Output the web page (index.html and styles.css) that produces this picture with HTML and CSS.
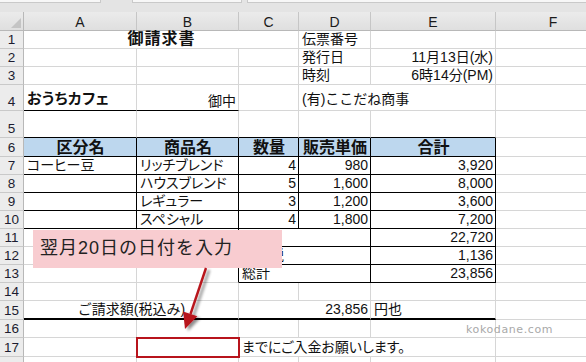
FILE: index.html
```html
<!DOCTYPE html>
<html lang="ja">
<head>
<meta charset="utf-8">
<title>御請求書</title>
<link rel="stylesheet" href="styles.css">
</head>
<body>
<div class="app">
  <div class="topbar">
    <span class="box box-1"></span>
    <span class="box box-2"></span>
    <span class="box box-3"></span>
  </div>
  <table class="sheet">
    <colgroup>
      <col class="c-rh"><col class="c-a"><col class="c-b"><col class="c-c"><col class="c-d"><col class="c-e"><col class="c-f">
    </colgroup>
    <thead>
      <tr class="colhead">
        <th class="corner"><span class="tri"></span></th>
        <th>A</th><th>B</th><th>C</th><th>D</th><th>E</th><th>F</th>
      </tr>
    </thead>
    <tbody>
      <tr class="h18">
        <th class="rn">1</th>
        <td colspan="3" class="title">御請求書</td>
        <td>伝票番号</td><td></td><td></td>
      </tr>
      <tr class="h18">
        <th class="rn">2</th>
        <td></td><td></td><td></td>
        <td>発行日</td><td class="r">11月13日(水)</td><td></td>
      </tr>
      <tr class="h18">
        <th class="rn">3</th>
        <td></td><td></td><td></td>
        <td>時刻</td><td class="r">6時14分(PM)</td><td></td>
      </tr>
      <tr class="h26">
        <th class="rn">4</th>
        <td class="bb shop mid">おうちカフェ</td>
        <td class="bb r">御中</td>
        <td></td>
        <td colspan="2" class="mid">(有)ここだね商事</td>
        <td></td>
      </tr>
      <tr class="h27">
        <th class="rn">5</th>
        <td class="bb"></td><td class="bb"></td><td class="bb"></td><td class="bb"></td><td class="bb"></td><td></td>
      </tr>
      <tr class="h19 head">
        <th class="rn">6</th>
        <td class="hd">区分名</td><td class="hd">商品名</td><td class="hd">数量</td><td class="hd">販売単価</td><td class="hd">合計</td><td></td>
      </tr>
      <tr class="h18">
        <th class="rn">7</th>
        <td class="bx kana">コーヒー豆</td><td class="bx kana">リッチブレンド</td><td class="bx r">4</td><td class="bx r">980</td><td class="bx r">3,920</td><td></td>
      </tr>
      <tr class="h18">
        <th class="rn">8</th>
        <td class="bx"></td><td class="bx kana">ハウスブレンド</td><td class="bx r">5</td><td class="bx r">1,600</td><td class="bx r">8,000</td><td></td>
      </tr>
      <tr class="h18">
        <th class="rn">9</th>
        <td class="bx"></td><td class="bx kana">レギュラー</td><td class="bx r">3</td><td class="bx r">1,200</td><td class="bx r">3,600</td><td></td>
      </tr>
      <tr class="h18">
        <th class="rn">10</th>
        <td class="bx"></td><td class="bx kana">スペシャル</td><td class="bx r">4</td><td class="bx r">1,800</td><td class="bx r">7,200</td><td></td>
      </tr>
      <tr class="h18">
        <th class="rn">11</th>
        <td></td><td class="br"></td>
        <td colspan="2" class="bx">小計</td><td class="bx r">22,720</td><td></td>
      </tr>
      <tr class="h18">
        <th class="rn">12</th>
        <td></td><td class="br"></td>
        <td colspan="2" class="bx">消費税</td><td class="bx r">1,136</td><td></td>
      </tr>
      <tr class="h18">
        <th class="rn">13</th>
        <td></td><td class="br"></td>
        <td colspan="2" class="bx">総計</td><td class="bx r">23,856</td><td></td>
      </tr>
      <tr class="h18">
        <th class="rn">14</th>
        <td></td><td></td><td></td><td></td><td></td><td></td>
      </tr>
      <tr class="h19">
        <th class="rn">15</th>
        <td colspan="2" class="thick ctr">ご請求額(税込み)</td>
        <td colspan="2" class="thick r">23,856</td>
        <td class="thick">円也</td>
        <td></td>
      </tr>
      <tr class="h18">
        <th class="rn">16</th>
        <td></td><td></td><td></td><td></td><td></td><td></td>
      </tr>
      <tr class="h19">
        <th class="rn">17</th>
        <td></td>
        <td class="target"></td>
        <td colspan="3" class="kana">までにご入金お願いします。</td>
        <td></td>
      </tr>
      <tr class="h18">
        <th class="rn rn-top">18</th>
        <td></td><td></td><td></td><td></td><td></td><td></td>
      </tr>
    </tbody>
  </table>

  <div class="callout">翌月20日の日付を入力</div>

  <svg class="arrow" width="586" height="362" viewBox="0 0 586 362">
    <defs>
      <filter id="shadow" x="-50%" y="-50%" width="200%" height="200%">
        <feGaussianBlur in="SourceAlpha" stdDeviation="1.6"/>
        <feOffset dx="3" dy="2" result="b"/>
        <feComponentTransfer><feFuncA type="linear" slope="0.45"/></feComponentTransfer>
        <feMerge><feMergeNode/><feMergeNode in="SourceGraphic"/></feMerge>
      </filter>
    </defs>
    <g filter="url(#shadow)">
      <line x1="206" y1="268" x2="190.5" y2="314" stroke="#b8141c" stroke-width="2.4"/>
      <polygon points="185,329 197.3,316.3 183.1,311.5" fill="#b8141c"/>
    </g>
  </svg>

  <div class="watermark">kokodane.com</div>
</div>
</body>
</html>
```

FILE: styles.css
```css
html, body {
  margin: 0;
  padding: 0;
  background: #ffffff;
}

body {
  width: 586px;
  height: 362px;
  overflow: hidden;
  font-family: "Liberation Sans", "Noto Sans CJK JP", sans-serif;
  color: #111;
}

.app {
  position: relative;
  width: 586px;
  height: 362px;
  overflow: hidden;
}

/* top strip (formula bar remains) */
.topbar {
  display: flex;
  align-items: flex-start;
  height: 12px;
  background: #e4e4e4;
}

.box {
  height: 2px;
  background: #f7f7f7;
  border: 1px solid #c9c9c9;
  border-top: 0;
}

.box-1 { width: 100px; border-left: 0; }
.box-2 { width: 108px; margin-left: 31px; }
.box-3 { flex: 1; margin-left: 5px; border-right: 0; }

/* sheet */
.sheet {
  table-layout: fixed;
  border-collapse: separate;
  border-spacing: 0;
  width: 611px;
}

.c-rh { width: 24px; }
.c-a { width: 113px; }
.c-b { width: 102px; }
.c-c { width: 60px; }
.c-d { width: 72px; }
.c-e { width: 125px; }
.c-f { width: 115px; }

.colhead th {
  height: 18px;
  padding: 0;
  background: linear-gradient(#ebebeb, #dfdfdf);
  border-right: 1px solid #c6c6c6;
  border-bottom: 1px solid #b8b8b8;
  font-size: 14px;
  font-weight: normal;
  line-height: 16px;
  color: #1b1b1b;
  text-align: center;
  vertical-align: bottom;
  box-sizing: border-box;
}

.colhead th.corner {
  text-align: right;
  padding: 0 2px 2px 0;
  border-right-color: #b8b8b8;
}

.tri {
  display: inline-block;
  width: 0;
  height: 0;
  border-left: 10px solid transparent;
  border-bottom: 10px solid #c4c4c4;
  vertical-align: bottom;
}

.h18 { height: 18px; }
.h19 { height: 19px; }
.h26 { height: 26px; }
.h27 { height: 27px; }

.rn {
  padding: 0 0 1px;
  background: #ececec;
  border-right: 1px solid #b8b8b8;
  border-bottom: 1px solid #c9c9c9;
  font-size: 13.5px;
  font-weight: normal;
  line-height: 15px;
  color: #1c1c30;
  text-align: center;
  vertical-align: bottom;
}

.rn.rn-top {
  vertical-align: top;
  padding: 2px 0 0;
}

.sheet td {
  padding: 0 2px 1px 3px;
  border-right: 1px solid #d6d6d6;
  border-bottom: 1px solid #d6d6d6;
  font-size: 14px;
  line-height: 16px;
  vertical-align: bottom;
  white-space: nowrap;
  color: #111;
}

.sheet td.r { text-align: right; padding-right: 2px; }
.sheet td.ctr { text-align: center; }
.sheet td.mid { vertical-align: middle; padding-bottom: 0; padding-top: 2px; }

.sheet td.bb { border-bottom-color: #000; }
.sheet td.br { border-right-color: #000; }
.sheet td.bx { border-right-color: #000; border-bottom-color: #000; }

.sheet td.title {
  text-align: center;
  font-size: 16px;
  font-weight: bold;
  letter-spacing: 1px;
  border-right-color: #d6d6d6;
}

.sheet td.shop {
  font-size: 15px;
  font-weight: bold;
  font-feature-settings: "palt";
  letter-spacing: 0.3px;
}

.sheet td.kana { font-feature-settings: "palt"; }

.sheet td.hd {
  background: #bdd7ee;
  border-right-color: #000;
  border-bottom-color: #000;
  text-align: center;
  font-size: 16px;
  font-weight: bold;
  line-height: 17px;
  padding-bottom: 0;
}

.sheet td.thick {
  border-bottom: 2px solid #000;
}

.sheet td.target {
  outline: 2px solid #b8141c;
  outline-offset: -1px;
}

/* overlays */
.callout {
  position: absolute;
  left: 33px;
  top: 230px;
  width: 242px;
  height: 38px;
  padding-left: 7px;
  background: #f8ccd0;
  font-family: "Liberation Sans", "Noto Sans CJK JP", sans-serif;
  font-size: 18px;
  line-height: 36px;
  letter-spacing: 1px;
  color: #222;
}

.arrow {
  position: absolute;
  left: 0;
  top: 0;
  pointer-events: none;
}

.watermark {
  position: absolute;
  left: 466px;
  top: 323px;
  font-family: "DejaVu Sans", sans-serif;
  font-size: 11px;
  letter-spacing: 0.6px;
  color: #a9a9a9;
}
```
